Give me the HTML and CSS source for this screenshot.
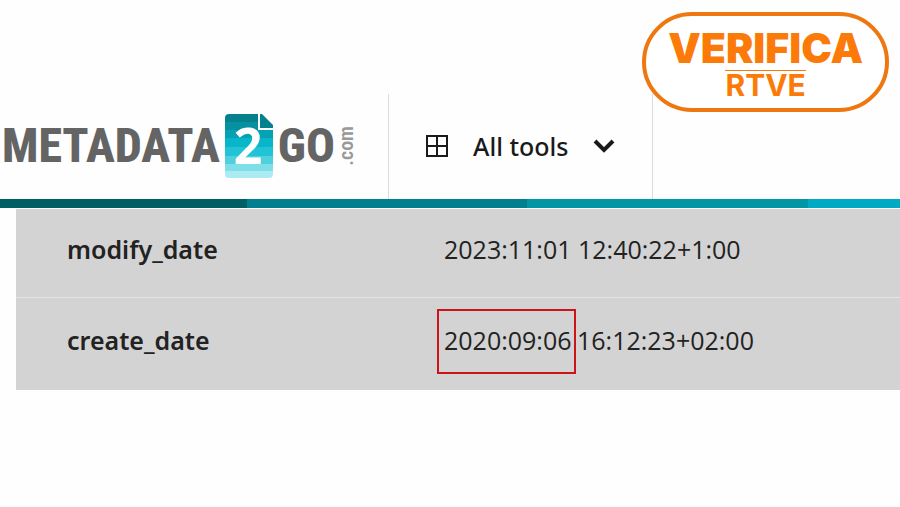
FILE: index.html
```
<!DOCTYPE html>
<html lang="en">
<head>
    <meta charset="UTF-8">
    <meta name="viewport" content="width=device-width, initial-scale=1.0">
    <title>Metadata2Go</title>
    <link rel="stylesheet" href="styles.css">
</head>
<body>
    <header class="header">
        <a class="logo" href="#" aria-label="Metadata2Go.com">
            <span class="logo-word">METADATA</span>
            <svg class="logo-file" viewBox="0 0 48 64" width="48" height="64">
                <defs>
                    <linearGradient id="bands" x1="0" y1="0" x2="0" y2="1">
                        <stop offset="0.12" stop-color="#04818d"/>
                        <stop offset="0.12" stop-color="#0591a0"/>
                        <stop offset="0.25" stop-color="#0591a0"/>
                        <stop offset="0.25" stop-color="#06a2b4"/>
                        <stop offset="0.38" stop-color="#06a2b4"/>
                        <stop offset="0.38" stop-color="#08b5c9"/>
                        <stop offset="0.52" stop-color="#08b5c9"/>
                        <stop offset="0.52" stop-color="#22c3d4"/>
                        <stop offset="0.66" stop-color="#22c3d4"/>
                        <stop offset="0.66" stop-color="#4ed0dd"/>
                        <stop offset="0.78" stop-color="#4ed0dd"/>
                        <stop offset="0.78" stop-color="#7fdfe8"/>
                        <stop offset="0.89" stop-color="#7fdfe8"/>
                        <stop offset="0.89" stop-color="#abebf1"/>
                    </linearGradient>
                </defs>
                <path d="M4 0H33V16H48V60Q48 64 44 64H4Q0 64 0 60V4Q0 0 4 0Z" fill="url(#bands)"/>
                <path d="M35 0H37L48 11V14H35Z" fill="#04818d"/>
                <text class="logo-two" x="23" y="50" text-anchor="middle">2</text>
            </svg>
            <span class="logo-word">GO</span>
            <span class="logo-com">.com</span>
        </a>
        <button class="tools-btn" type="button">
            <svg class="grid-icon" viewBox="0 0 22 22" width="22" height="22">
                <path d="M1 1H21V21H1ZM11 1V21M1 11H21" fill="none" stroke="#1a1a1a" stroke-width="2"/>
            </svg>
            <span>All tools</span>
            <svg class="chevron" viewBox="0 0 22 14" width="22" height="14">
                <path d="M2 2L11 11L20 2" fill="none" stroke="#1a1a1a" stroke-width="4"/>
            </svg>
        </button>
    </header>

    <div class="stripe">
        <span class="stripe-part stripe-dark"></span>
        <span class="stripe-part stripe-teal"></span>
        <span class="stripe-part stripe-mid"></span>
        <span class="stripe-part stripe-light"></span>
    </div>

    <main class="content">
        <table class="metadata">
            <tbody>
                <tr>
                    <th scope="row">modify_date</th>
                    <td>2023:11:01 12:40:22+1:00</td>
                </tr>
                <tr>
                    <th scope="row">create_date</th>
                    <td><span class="marked">2020:09:06</span> 16:12:23+02:00</td>
                </tr>
            </tbody>
        </table>
    </main>

    <div class="badge">
        <span class="badge-title">VERIFICA</span>
        <span class="badge-brand">RTVE</span>
    </div>
</body>
</html>
```
FILE: styles.css
```
* {
    margin: 0;
    padding: 0;
    box-sizing: border-box;
}

body {
    font-family: "Noto Sans", "Open Sans", sans-serif;
    font-size: 25px;
    line-height: 34px;
    background: #fefefe;
    color: #222222;
}

.header {
    display: flex;
    align-items: stretch;
    padding-top: 94px;
}

.logo {
    display: flex;
    align-items: center;
    gap: 5px;
    padding: 20px 36px 21px 2px;
    color: #646464;
    text-decoration: none;
}

.logo-word {
    font-family: "Roboto Condensed", Roboto, sans-serif;
    font-size: 48px;
    font-weight: 800;
    line-height: 64px;
}

.logo-file {
    display: block;
    overflow: visible;
}

.logo-two {
    font-family: "Open Sans", sans-serif;
    font-size: 50px;
    font-weight: 700;
    fill: #ffffff;
}

.logo-com {
    writing-mode: vertical-rl;
    transform: rotate(180deg);
    font-family: "Roboto Condensed", Roboto, sans-serif;
    font-size: 20px;
    font-weight: 600;
    line-height: 12px;
    color: #999999;
}

.tools-btn {
    display: flex;
    align-items: center;
    gap: 25px;
    padding: 0 37px 2px;
    background: none;
    border: solid #dcdcdc;
    border-width: 0 1px;
    color: #1a1a1a;
    font-family: inherit;
    font-size: 25px;
    font-weight: 500;
    cursor: pointer;
}

.stripe {
    display: flex;
    height: 9px;
}

.stripe-part {
    flex: 0 0 31.2%;
}

.stripe-dark {
    flex-basis: 27.4%;
    background: #005f62;
}

.stripe-teal {
    background: #00808f;
}

.stripe-mid {
    background: #0096a6;
}

.stripe-light {
    flex: 1;
    background: #00a9c4;
}

.content {
    padding: 1px 0 0 16px;
}

.metadata {
    width: 100%;
    border-collapse: collapse;
    background: #d3d3d3;
}

.metadata th,
.metadata td {
    padding: 23px 0 31px;
    text-align: left;
}

.metadata th {
    width: 428px;
    padding-left: 51px;
    font-weight: 600;
}

.metadata td {
    font-family: "Open Sans", sans-serif;
    font-size: 25px;
}

.metadata tr + tr {
    border-top: 1px solid #e4e4e4;
}

.metadata tr + tr th,
.metadata tr + tr td {
    padding: 25px 0 33px;
}

.metadata tr + tr th {
    padding-left: 51px;
}

.marked {
    padding: 12px 2px 15px 5px;
    margin: 0 -5px 0 -7px;
    border: 2px solid #cc1318;
}

.badge {
    position: absolute;
    top: 12px;
    right: 11px;
    display: flex;
    flex-direction: column;
    align-items: center;
    padding: 10px 22px 9px;
    border: 4px solid #ef7710;
    border-radius: 50px;
    background: #ffffff;
    color: #fb7a08;
    font-family: Inter, sans-serif;
}

.badge-title {
    font-size: 41px;
    font-weight: 900;
    line-height: 44px;
}

.badge-brand {
    border-top: 1px solid #fb7a08;
    font-size: 30px;
    font-weight: 700;
    line-height: 28px;
}
```
